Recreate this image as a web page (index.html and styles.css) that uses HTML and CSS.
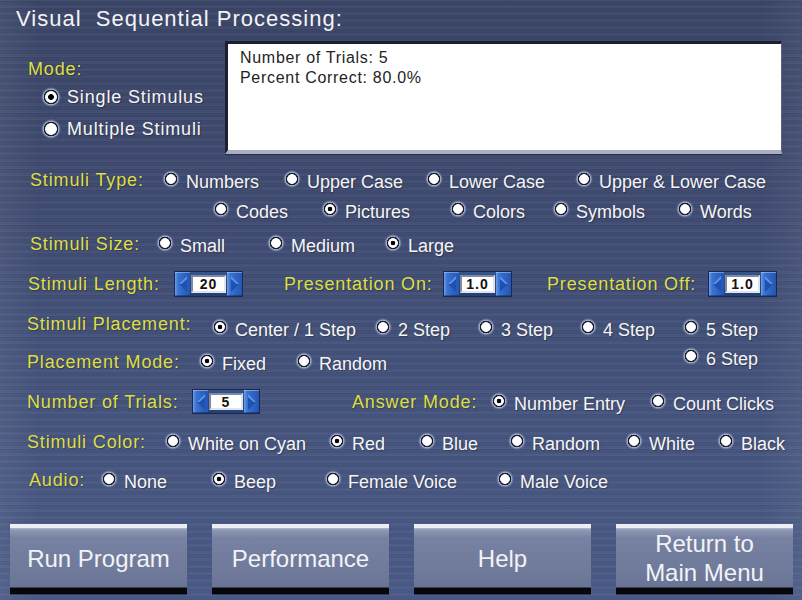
FILE: index.html
```html
<!DOCTYPE html>
<html lang="en">
<head>
<meta charset="utf-8">
<title>Visual Sequential Processing</title>
<link rel="stylesheet" href="styles.css">
</head>
<body>
<div class="screen">
  <h1 class="title">Visual&nbsp; Sequential Processing:</h1>

  <div class="top">
    <div class="mode">
      <div class="lbl mode-lbl">Mode:</div>
      <div class="opt big sel first"><span class="radio"></span><span class="txt">Single Stimulus</span></div>
      <div class="opt big second"><span class="radio"></span><span class="txt">Multiple Stimuli</span></div>
    </div>
    <div class="results">
      <p>Number of Trials: 5</p>
      <p>Percent Correct: 80.0%</p>
    </div>
  </div>

  <div class="rows">
    <div class="row r-type1">
      <div class="lbl">Stimuli Type:</div>
      <div class="opt"><span class="radio"></span><span class="txt">Numbers</span></div>
      <div class="opt"><span class="radio"></span><span class="txt">Upper Case</span></div>
      <div class="opt"><span class="radio"></span><span class="txt">Lower Case</span></div>
      <div class="opt"><span class="radio"></span><span class="txt">Upper &amp; Lower Case</span></div>
    </div>
    <div class="row r-type2">
      <div class="opt"><span class="radio"></span><span class="txt">Codes</span></div>
      <div class="opt sel"><span class="radio"></span><span class="txt">Pictures</span></div>
      <div class="opt"><span class="radio"></span><span class="txt">Colors</span></div>
      <div class="opt"><span class="radio"></span><span class="txt">Symbols</span></div>
      <div class="opt"><span class="radio"></span><span class="txt">Words</span></div>
    </div>
    <div class="row r-size">
      <div class="lbl">Stimuli Size:</div>
      <div class="opt"><span class="radio"></span><span class="txt">Small</span></div>
      <div class="opt"><span class="radio"></span><span class="txt">Medium</span></div>
      <div class="opt sel"><span class="radio"></span><span class="txt">Large</span></div>
    </div>
    <div class="row r-len">
      <div class="lbl on-spin">Stimuli Length:</div>
      <div class="spin">
        <span class="sbtn"><svg width="10" height="18" viewBox="0 0 10 18"><polygon points="9,1 9,17 1,9" fill="#1f51b0"/><polygon points="9,1 9,4 3.5,9 1,9" fill="#5d95e6"/></svg></span>
        <span class="field">20</span>
        <span class="sbtn"><svg width="10" height="18" viewBox="0 0 10 18"><polygon points="1,1 1,17 9,9" fill="#1f51b0"/><polygon points="1,1 1,4 6.5,9 9,9" fill="#5d95e6"/></svg></span>
      </div>
      <div class="lbl on-spin">Presentation On:</div>
      <div class="spin">
        <span class="sbtn"><svg width="10" height="18" viewBox="0 0 10 18"><polygon points="9,1 9,17 1,9" fill="#1f51b0"/><polygon points="9,1 9,4 3.5,9 1,9" fill="#5d95e6"/></svg></span>
        <span class="field">1.0</span>
        <span class="sbtn"><svg width="10" height="18" viewBox="0 0 10 18"><polygon points="1,1 1,17 9,9" fill="#1f51b0"/><polygon points="1,1 1,4 6.5,9 9,9" fill="#5d95e6"/></svg></span>
      </div>
      <div class="lbl on-spin">Presentation Off:</div>
      <div class="spin">
        <span class="sbtn"><svg width="10" height="18" viewBox="0 0 10 18"><polygon points="9,1 9,17 1,9" fill="#1f51b0"/><polygon points="9,1 9,4 3.5,9 1,9" fill="#5d95e6"/></svg></span>
        <span class="field">1.0</span>
        <span class="sbtn"><svg width="10" height="18" viewBox="0 0 10 18"><polygon points="1,1 1,17 9,9" fill="#1f51b0"/><polygon points="1,1 1,4 6.5,9 9,9" fill="#5d95e6"/></svg></span>
      </div>
    </div>
    <div class="row r-place">
      <div class="lbl high">Stimuli Placement:</div>
      <div class="opt sel"><span class="radio"></span><span class="txt">Center / 1 Step</span></div>
      <div class="opt"><span class="radio"></span><span class="txt">2 Step</span></div>
      <div class="opt"><span class="radio"></span><span class="txt">3 Step</span></div>
      <div class="opt"><span class="radio"></span><span class="txt">4 Step</span></div>
      <div class="opt"><span class="radio"></span><span class="txt">5 Step</span></div>
    </div>
    <div class="row r-pmode">
      <div class="lbl">Placement Mode:</div>
      <div class="opt sel"><span class="radio"></span><span class="txt">Fixed</span></div>
      <div class="opt"><span class="radio"></span><span class="txt">Random</span></div>
      <div class="opt raised"><span class="radio"></span><span class="txt">6 Step</span></div>
    </div>
    <div class="row r-trials">
      <div class="lbl on-spin">Number of Trials:</div>
      <div class="spin small">
        <span class="sbtn"><svg width="10" height="18" viewBox="0 0 10 18"><polygon points="9,1 9,17 1,9" fill="#1f51b0"/><polygon points="9,1 9,4 3.5,9 1,9" fill="#5d95e6"/></svg></span>
        <span class="field">5</span>
        <span class="sbtn"><svg width="10" height="18" viewBox="0 0 10 18"><polygon points="1,1 1,17 9,9" fill="#1f51b0"/><polygon points="1,1 1,4 6.5,9 9,9" fill="#5d95e6"/></svg></span>
      </div>
      <div class="lbl on-spin">Answer Mode:</div>
      <div class="opt on-spin-opt sel"><span class="radio"></span><span class="txt">Number Entry</span></div>
      <div class="opt on-spin-opt"><span class="radio"></span><span class="txt">Count Clicks</span></div>
    </div>
    <div class="row r-color">
      <div class="lbl">Stimuli Color:</div>
      <div class="opt"><span class="radio"></span><span class="txt">White on Cyan</span></div>
      <div class="opt sel"><span class="radio"></span><span class="txt">Red</span></div>
      <div class="opt"><span class="radio"></span><span class="txt">Blue</span></div>
      <div class="opt"><span class="radio"></span><span class="txt">Random</span></div>
      <div class="opt"><span class="radio"></span><span class="txt">White</span></div>
      <div class="opt"><span class="radio"></span><span class="txt">Black</span></div>
    </div>
    <div class="row r-audio">
      <div class="lbl">Audio:</div>
      <div class="opt"><span class="radio"></span><span class="txt">None</span></div>
      <div class="opt sel"><span class="radio"></span><span class="txt">Beep</span></div>
      <div class="opt"><span class="radio"></span><span class="txt">Female Voice</span></div>
      <div class="opt"><span class="radio"></span><span class="txt">Male Voice</span></div>
    </div>
  </div>

  <div class="buttons">
    <button class="btn" type="button">Run Program</button>
    <button class="btn" type="button">Performance</button>
    <button class="btn" type="button">Help</button>
    <button class="btn two" type="button">Return to<br>Main Menu</button>
  </div>
</div>
</body>
</html>
```

FILE: styles.css
```css
html, body {
  margin: 0;
  padding: 0;
}

body {
  width: 802px;
  height: 600px;
  overflow: hidden;
  font-family: "Liberation Sans", Arial, sans-serif;
  background-color: #414e74;
  background-image:
    repeating-linear-gradient(180deg, rgba(255,255,255,0.04) 0 1px, rgba(0,0,0,0.06) 1px 2px, rgba(255,255,255,0) 2px 3px, rgba(0,0,0,0.035) 3px 5px, rgba(255,255,255,0.02) 5px 7px),
    linear-gradient(90deg, rgba(255,255,255,0.06) 0, rgba(255,255,255,0) 40px, rgba(255,255,255,0) 760px, rgba(255,255,255,0.05) 802px),
    linear-gradient(180deg, #3b4668 0%, #404c72 35%, #46557e 70%, #4b5b88 100%);
}

.screen {
  padding-top: 6px;
}

.title {
  margin: 0;
  padding-left: 16px;
  font-size: 22px;
  line-height: 26px;
  font-weight: normal;
  letter-spacing: 1px;
  color: #f4f4f6;
  white-space: nowrap;
}

/* ---------- top section ---------- */
.top {
  display: flex;
  margin-top: 9px;
  height: 113px;
}

.mode {
  width: 225px;
  flex: none;
}

.mode-lbl {
  padding-left: 28px;
}

.results {
  width: 557px;
  height: 113px;
  box-sizing: border-box;
  background: #ffffff;
  border-top: 3px solid #1b2133;
  border-left: 3px solid #1b2133;
  border-right: 1px solid #59637d;
  border-bottom: 4px solid #a9afbf;
  box-shadow: 0 1px 0 #262d44;
  padding: 4px 12px 0 12px;
}

.results p {
  margin: 0;
  font-size: 16px;
  line-height: 20px;
  letter-spacing: 0.7px;
  color: #242424;
}

/* ---------- labels ---------- */
.lbl {
  font-size: 18px;
  line-height: 20px;
  letter-spacing: 0.85px;
  color: #dede42;
  white-space: nowrap;
  margin-top: -2px;
  text-shadow: 1px 1px 1px rgba(0,0,0,0.25);
}

.lbl.mode-lbl { margin-top: 18px; }
.lbl.high { margin-top: -6px; }
.lbl.on-spin { margin-top: 3px; }

/* ---------- radio options ---------- */
.opt {
  display: flex;
  align-items: flex-start;
  white-space: nowrap;
}

.opt .txt {
  font-size: 18px;
  line-height: 20px;
  color: #f5f5f7;
  margin-left: 6px;
  text-shadow: 1px 1px 1px rgba(0,0,0,0.3);
}

.radio {
  flex: none;
  width: 18px;
  height: 18px;
  margin-top: -2px;
  border-radius: 50%;
  background: radial-gradient(circle at 50% 50%,
    #ffffff 0 4px, #e9e9ee 4.6px,
    #1a1d2b 5.2px 6px,
    #aab5d3 6.6px,
    rgba(130,145,185,0.65) 7.6px,
    rgba(80,95,135,0) 9px);
}

.opt.sel .radio {
  background: radial-gradient(circle at 50% 50%,
    #000000 0 2px, #ffffff 2.6px 4px, #e9e9ee 4.6px,
    #1a1d2b 5.2px 6px,
    #aab5d3 6.6px,
    rgba(130,145,185,0.65) 7.6px,
    rgba(80,95,135,0) 9px);
}

.opt.big {
  align-items: center;
  margin-left: 41px;
}

.opt.big .radio {
  width: 20px;
  height: 20px;
  margin-top: 0;
  background: radial-gradient(circle at 50% 50%,
    #ffffff 0 5px, #e9e9ee 5.6px,
    #1a1d2b 6.2px 7px,
    #aab5d3 7.6px,
    rgba(130,145,185,0.65) 8.6px,
    rgba(80,95,135,0) 10px);
}

.opt.big.sel .radio {
  background: radial-gradient(circle at 50% 50%,
    #000000 0 2.6px, #ffffff 3.2px 5px, #e9e9ee 5.6px,
    #1a1d2b 6.2px 7px,
    #aab5d3 7.6px,
    rgba(130,145,185,0.65) 8.6px,
    rgba(80,95,135,0) 10px);
}

.opt.big .txt {
  margin-left: 6px;
  letter-spacing: 0.85px;
}

.opt.first { margin-top: 8px; }
.opt.second { margin-top: 12px; }

.opt.raised { margin-top: -5px; }
.opt.on-spin-opt { margin-top: 5px; }

/* ---------- rows ---------- */
.rows {
  margin-top: 18px;
}

.row {
  display: grid;
  align-items: start;
  box-sizing: border-box;
}

.r-type1 { height: 30px; padding-left: 30px; grid-template-columns: 132px 121px 142px 150px auto; }
.r-type2 { height: 34px; padding-left: 212px; grid-template-columns: 109px 128px 103px 124px auto; }
.r-size  { height: 35px; padding-left: 30px; grid-template-columns: 126px 111px 117px auto; }
.r-len   { height: 49px; padding-left: 28px; grid-template-columns: 146px 110px 159px 104px 161px auto; }
.r-place { height: 34px; padding-left: 27px; grid-template-columns: 184px 163px 103px 102px 103px auto; }
.r-pmode { height: 35px; padding-left: 27px; grid-template-columns: 171px 97px 387px auto; }
.r-trials{ height: 45px; padding-left: 27px; grid-template-columns: 165px 160px 138px 159px auto; }
.r-color { height: 38px; padding-left: 27px; grid-template-columns: 137px 164px 90px 90px 117px 92px auto; }
.r-audio { height: 20px; padding-left: 29px; grid-template-columns: 71px 110px 114px 172px auto; }

/* ---------- spinners ---------- */
.spin {
  display: flex;
  width: 69px;
  height: 26px;
  box-sizing: border-box;
  border: 1px solid #1b2850;
  background: linear-gradient(180deg, #34548f, #263f72);
}

.spin.small {
  width: 68px;
  height: 25px;
}

.sbtn {
  width: 15px;
  flex: none;
  display: flex;
  align-items: center;
  justify-content: center;
  background: linear-gradient(90deg, #6a9fea 0, #3a74d2 3px, #2f66c6 8px, #2457b4 15px);
  box-shadow: inset 0 1px 0 rgba(255,255,255,0.35), inset 0 -1px 0 rgba(0,0,0,0.3);
}

.field {
  flex: 1;
  margin: 3px 1px;
  box-sizing: border-box;
  background: #ffffff;
  border: 2px solid;
  border-color: #7f8aa0 #dfe3ea #dfe3ea #7f8aa0;
  display: flex;
  align-items: center;
  justify-content: center;
  font-size: 14px;
  font-weight: bold;
  letter-spacing: 1px;
  color: #111111;
}

/* ---------- bottom buttons ---------- */
.buttons {
  display: flex;
  gap: 25px;
  padding-left: 10px;
  margin-top: 32px;
}

.btn {
  width: 177px;
  height: 70px;
  box-sizing: border-box;
  padding: 0;
  border: none;
  border-top: 4px solid #eceef3;
  border-bottom: 6px solid #06070a;
  background: linear-gradient(180deg, #b6bccc 0, #8e98b5 2px, #7782a2 10px, #707b9b 40px, #6a7595 100%);
  box-shadow: 0 1px 0 rgba(0,0,0,0.4), inset 0 -1px 0 #3a3f52;
  font-family: "Liberation Sans", Arial, sans-serif;
  font-size: 24px;
  line-height: 29px;
  color: #f2f3f6;
  text-align: center;
  cursor: pointer;
}
```
